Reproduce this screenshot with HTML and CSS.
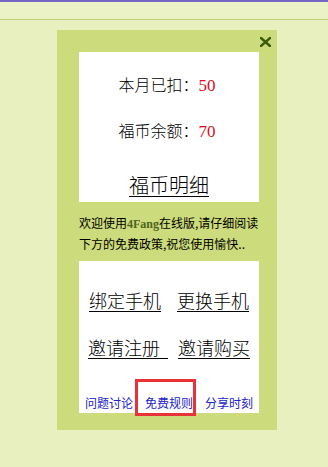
FILE: index.html
```html
<!DOCTYPE html>
<html lang="zh-CN">
<head>
<meta charset="utf-8">
<title>福币</title>
<link rel="stylesheet" href="styles.css">
</head>
<body>
<div class="topbar"></div>
<div class="header"></div>
<div class="panel">
  <a class="close" href="#" aria-label="关闭">
    <svg width="11" height="10" viewBox="0 0 11 10"><path d="M1 1 L10 9 M10 1 L1 9" stroke="#3b5a0c" stroke-width="2.4" stroke-linecap="square"/></svg>
  </a>
  <div class="box stats">
    <p class="stat">本月已扣：<span class="num">50</span></p>
    <p class="stat">福币余额：<span class="num">70</span></p>
    <a class="detail" href="#">福币明细</a>
  </div>
  <p class="intro">欢迎使用<span class="brand">4Fang</span>在线版,请仔细阅读<br>下方的免费政策,祝您使用愉快..</p>
  <div class="box actions">
    <div class="row row1">
      <a href="#">绑定手机</a>
      <a href="#">更换手机</a>
    </div>
    <div class="row row2">
      <a href="#">邀请注册&nbsp;&nbsp;</a>
      <a href="#">邀请购买</a>
    </div>
    <div class="links">
      <a href="#">问题讨论</a>
      <a href="#" class="current">免费规则<span class="mark"></span></a>
      <a href="#">分享时刻</a>
    </div>
  </div>
</div>
</body>
</html>
```
FILE: styles.css
```css
html, body {
  margin: 0;
  padding: 0;
}
body {
  background: #e8f0c0;
  font-family: "Noto Sans CJK SC", "Noto Sans", sans-serif;
  color: #000;
  width: 328px;
  height: 467px;
  overflow: hidden;
}
.topbar {
  height: 2px;
  background: #7467c4;
}
.header {
  height: 17px;
  background: #eaf2c6;
  border-bottom: 1px solid #c3cd76;
}
.panel {
  position: relative;
  box-sizing: border-box;
  width: 220px;
  height: 400px;
  margin: 10px 0 0 57px;
  padding: 22px 18px 18px 22px;
  background: #ccdb7c;
}
.close {
  position: absolute;
  left: 203px;
  top: 7px;
  width: 11px;
  height: 10px;
  display: block;
}
.close svg {
  display: block;
}
.box {
  background: #fff;
  box-sizing: border-box;
}
.stats {
  height: 150px;
  padding-top: 20px;
  text-align: center;
}
.stat {
  margin: 0 0 20px;
  font-size: 16px;
  font-weight: 300;
  line-height: 24px;
  padding-right: 4px;
}
.stat:nth-child(2) {
  margin-bottom: 27px;
}
.num {
  font-family: "Liberation Serif", serif;
  font-weight: normal;
  color: #dc0a1e;
  font-size: 17px;
}
.detail {
  display: inline-block;
  font-size: 20px;
  font-weight: 300;
  line-height: 28px;
  color: #000;
  text-decoration: underline;
  text-decoration-thickness: 1px;
  text-underline-offset: 3px;
}
.intro {
  margin: 11px 0 8px;
  font-size: 12px;
  line-height: 19px;
  white-space: nowrap;
}
.brand {
  font-family: "Liberation Serif", serif;
  font-weight: bold;
  color: #4f6420;
  font-size: 12px;
}
.actions {
  height: 152px;
  padding-top: 27px;
}
.row {
  display: flex;
  justify-content: center;
  font-size: 18px;
  font-weight: 300;
  line-height: 24px;
}
.row1 {
  gap: 16px;
  margin-bottom: 23px;
}
.row2 {
  gap: 10px;
  margin-bottom: 34px;
}
.row a {
  color: #000;
  text-decoration: underline;
  text-decoration-thickness: 1px;
  text-underline-offset: 3px;
  white-space: pre;
}
.links {
  display: flex;
  justify-content: center;
  gap: 12px;
  font-size: 12px;
  line-height: 20px;
}
.links a {
  color: #2222cc;
  text-decoration: none;
  position: relative;
}
.mark {
  position: absolute;
  left: -10px;
  top: -14px;
  width: 55px;
  height: 31px;
  border: 3px solid #e8323a;
}
```
